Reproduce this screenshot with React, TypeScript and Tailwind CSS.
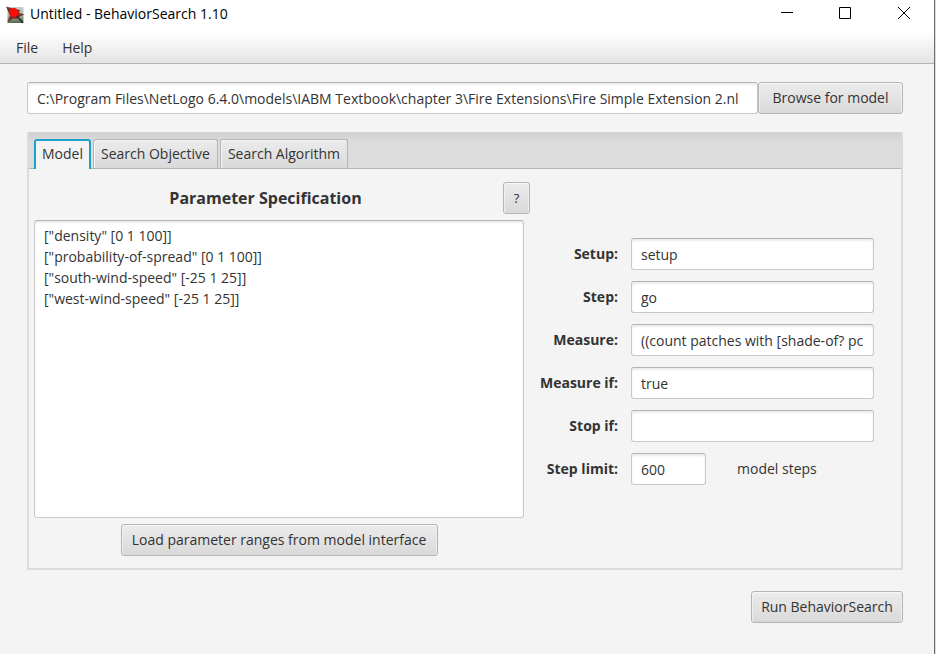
import { useState } from "react";

const BUTTON =
  "h-8 rounded-[3px] border border-[#b4b4b4] bg-linear-to-b from-[#ececec] to-[#d9d9d9] text-center whitespace-nowrap shadow-[inset_0_1px_0_#f8f8f8,inset_1px_0_0_#efefef,inset_-1px_0_0_#efefef]";
const FIELD =
  "h-8 rounded-[3px] border border-[#c8c8c8] border-t-[#b4b4b4] bg-white px-[9px] shadow-[inset_0_2px_2px_#ececec] outline-none";

const TABS = ["Model", "Search Objective", "Search Algorithm"];

const FIELDS = [
  { id: "setup", label: "Setup:", value: "setup" },
  { id: "step", label: "Step:", value: "go" },
  { id: "measure", label: "Measure:", value: "((count patches with [shade-of? pc" },
  { id: "measure-if", label: "Measure if:", value: "true" },
  { id: "stop-if", label: "Stop if:", value: "" },
];

const RANGES = `["density" [0 1 100]]
["probability-of-spread" [0 1 100]]
["south-wind-speed" [-25 1 25]]
["west-wind-speed" [-25 1 25]]`;

function AppIcon() {
  return (
    <svg width="19" height="18" viewBox="0 0 19 18" aria-hidden="true">
      <defs>
        <linearGradient id="tile" x1="0" y1="0" x2="0" y2="1">
          <stop offset="0" stopColor="#c3d0d6" />
          <stop offset="0.5" stopColor="#a9b5a6" />
          <stop offset="1" stopColor="#55694f" />
        </linearGradient>
      </defs>
      <rect x="1.5" y="1" width="16" height="16" rx="1" fill="url(#tile)" />
      <path d="M0 0.500 L8 3 L14 4 L13 7 L18.500 8.500 L12.500 11 L11 13 L7 12.500 L1.500 16.500 L4 9.500 Z" fill="#7c2e2b" />
      <path d="M11 10 L16.500 16.500" stroke="#252525" strokeWidth="1.500" strokeLinecap="round" />
      <circle cx="8" cy="6.600" r="4.500" fill="#f90d05" />
    </svg>
  );
}

function TitleBar() {
  return (
    <header className="flex h-8 items-center bg-white pl-[6px] text-black">
      <span className="-mt-[3px]">
        <AppIcon />
      </span>
      <h1 className="ml-[5px] flex-1 pb-1 leading-5">Untitled - BehaviorSearch 1.10</h1>
      <div className="flex self-start">
        <button type="button" aria-label="Minimize" className="flex h-[26px] w-[58px] items-center justify-center">
          <svg width="12" height="12" viewBox="0 0 12 12" stroke="currentColor" fill="none">
            <path d="M0 5.500H12" />
          </svg>
        </button>
        <button type="button" aria-label="Maximize" className="flex h-[26px] w-[58px] items-center justify-center">
          <svg width="12" height="12" viewBox="0 0 12 12" stroke="currentColor" fill="none">
            <path d="M0.500 0.500H11.500V11.500H0.500Z" />
          </svg>
        </button>
        <button type="button" aria-label="Close" className="flex h-[26px] w-[60px] items-center justify-center">
          <svg width="12" height="12" viewBox="0 0 12 12" stroke="currentColor" fill="none">
            <path d="M0 0L12 12M12 0L0 12" />
          </svg>
        </button>
      </div>
    </header>
  );
}

export default function App() {
  const [tab, setTab] = useState("Model");

  return (
    <div className="flex min-h-screen bg-[#dcdcdc] font-['Open_Sans','Noto_Sans',sans-serif] text-[14px] leading-5 text-[#333333]">
      <div className="flex min-w-0 flex-1 flex-col border-r border-[#6e6e6e] bg-[#f4f4f4]">
        <TitleBar />
        <nav className="flex h-8 items-center gap-6 border-b border-[#b4b4b4] bg-linear-to-b from-white to-[#e4e4e4] px-4">
          <button type="button">File</button>
          <button type="button">Help</button>
        </nav>

        <main className="pt-[18px] pr-[31px] pb-6 pl-[27px]">
          <div className="flex">
            <input
              aria-label="Model file"
              className={`${FIELD} min-w-0 flex-1`}
              defaultValue="C:\Program Files\NetLogo 6.4.0\models\IABM Textbook\chapter 3\Fire Extensions\Fire Simple Extension 2.nl"
            />
            <button type="button" className={`${BUTTON} w-[145px]`}>
              Browse for model
            </button>
          </div>

          <section className="mt-[18px] border-2 border-t-0 border-[#dcdcdc]">
            <div
              role="tablist"
              className="flex h-[37px] items-end gap-[2px] border-b border-[#b4b4b4] bg-linear-to-b from-[#d0d0d0] to-[#dcdcdc] to-30% pl-[5px]"
            >
              {TABS.map((name) => (
                <button
                  key={name}
                  type="button"
                  role="tab"
                  aria-selected={tab === name}
                  onClick={() => setTab(name)}
                  className={
                    tab === name
                      ? "-mb-px h-[30px] rounded-t-[3px] border-2 border-b-0 border-[#1ca0cc] bg-[#f4f4f4] px-[6px] pb-[2px]"
                      : "h-[29px] rounded-t-[3px] border border-b-0 border-[#b4b4b4] bg-linear-to-b from-[#ececec] to-[#d9d9d9] px-[7px] shadow-[inset_1px_1px_0_#f6f6f6]"
                  }
                >
                  {name}
                </button>
              ))}
            </div>

            <div className="flex pt-[13px] pr-[27px] pb-3 pl-[5px]">
              <div className="w-[496px] shrink-0">
                <div className="flex items-center">
                  <h2 className="flex-1 pr-[6px] text-center text-[16px] leading-6 font-bold">
                    Parameter Specification
                  </h2>
                  <button type="button" aria-label="Help" className={`${BUTTON} w-[27px] text-[13px]`}>
                    ?
                  </button>
                </div>
                <textarea
                  aria-label="Parameter Specification"
                  className="mt-[6px] block h-[298px] w-[490px] resize-none rounded-[3px] border border-[#c8c8c8] border-t-[#b4b4b4] bg-white px-[9px] py-1 text-[14px] leading-[21px] shadow-[inset_0_2px_2px_#ececec] outline-none"
                  defaultValue={RANGES}
                />
                <div className="mt-[6px] flex w-[490px] justify-center">
                  <button type="button" className={`${BUTTON} w-[317px]`}>
                    Load parameter ranges from model interface
                  </button>
                </div>
              </div>

              <form className="mt-14 grid flex-1 auto-rows-[32px] grid-cols-[88px_minmax(0,1fr)] items-center gap-x-[13px] gap-y-[11px]">
                {FIELDS.map((f) => (
                  <div key={f.id} className="contents">
                    <label htmlFor={f.id} className="text-right font-bold whitespace-nowrap">
                      {f.label}
                    </label>
                    <input id={f.id} className={`${FIELD} w-full`} defaultValue={f.value} />
                  </div>
                ))}
                <label htmlFor="limit" className="text-right font-bold whitespace-nowrap">
                  Step limit:
                </label>
                <div className="flex items-center gap-[31px]">
                  <input id="limit" className={`${FIELD} w-[75px]`} defaultValue="600" />
                  <span>model steps</span>
                </div>
              </form>
            </div>
          </section>

          <div className="mt-[21px] flex justify-end">
            <button type="button" className={`${BUTTON} w-[152px]`}>
              Run BehaviorSearch
            </button>
          </div>
        </main>
      </div>
      <div className="w-px" />
    </div>
  );
}
